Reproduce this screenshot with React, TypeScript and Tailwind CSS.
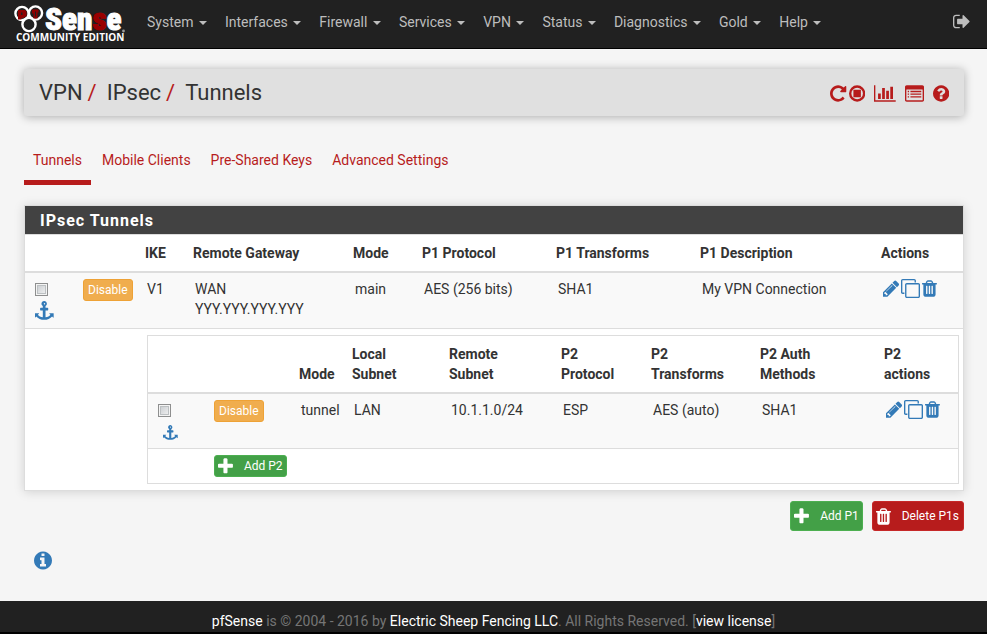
import type { ReactNode } from "react";

const PATHS = {
  repeat:
    "M1664 256v448q0 26-19 45t-45 19h-448q-42 0-59-40-17-39 14-69l138-138q-148-137-349-137-104 0-198.5 40.5t-163.5 109.5-109.5 163.5-40.5 198.5 40.5 198.5 109.5 163.5 163.5 109.5 198.5 40.5q119 0 225-52t179-147q7-10 23-12 15 0 25 9l137 138q9 8 9.5 20.5t-7.5 22.5q-109 132-264 204.5t-327 72.5q-156 0-298-61t-245-164-164-245-61-298 61-298 164-245 245-164 298-61q147 0 284.5 55.5t244.5 156.5l130-129q29-31 70-14 39 17 39 59z",
  stop: "M896 128a768 768 0 1 0 0 1536a768 768 0 1 0 0-1536zm0 224a544 544 0 1 1 0 1088a544 544 0 1 1 0-1088zM576 544h640q32 0 32 32v640q0 32-32 32h-640q-32 0-32-32v-640q0-32 32-32z",
  chart:
    "M640 896v512h-256v-512h256zm384-512v1024h-256v-1024h256zm1024 1152v128h-2048v-1536h128v1408h1920zm-640-896v768h-256v-768h256zm384-384v1152h-256v-1152h256z",
  list: "M160 128h1472q66 0 113 47t47 113v1216q0 66-47 113t-113 47h-1472q-66 0-113-47t-47-113v-1216q0-66 47-113t113-47zM128 544v960q0 32 32 32h1472q32 0 32-32v-960q0-32-32-32h-1472q-32 0-32 32zM256 640h128v128h-128zM512 640h1024v128h-1024zM256 896h128v128h-128zM512 896h1024v128h-1024zM256 1152h128v128h-128zM512 1152h1024v128h-1024z",
  question:
    "M1024 1376v-192q0-14-9-23t-23-9h-192q-14 0-23 9t-9 23v192q0 14 9 23t23 9h192q14 0 23-9t9-23zm256-672q0-88-55.5-163t-138.5-116-170-41q-243 0-371 213-15 24 8 42l132 100q7 6 19 6 16 0 25-12 53-68 86-92 34-24 86-24 48 0 85.5 26t37.5 59q0 38-20 61t-68 45q-63 28-115.5 86.5t-52.5 125.5v36q0 14 9 23t23 9h192q14 0 23-9t9-23q0-19 21.5-49.5t54.5-49.5q32-18 49-28.5t46-35 44.5-48 28-60.5 12.5-81zm384 192q0 209-103 385.5t-279.5 279.5-385.5 103-385.5-103-279.5-279.5-103-385.5 103-385.5 279.5-279.5 385.5-103 385.5 103 279.5 279.5 103 385.5z",
  info: "M1152 1376v-160q0-14-9-23t-23-9h-96v-512q0-14-9-23t-23-9h-320q-14 0-23 9t-9 23v160q0 14 9 23t23 9h96v320h-96q-14 0-23 9t-9 23v160q0 14 9 23t23 9h448q14 0 23-9t9-23zm-128-896v-160q0-14-9-23t-23-9h-192q-14 0-23 9t-9 23v160q0 14 9 23t23 9h192q14 0 23-9t9-23zm640 416q0 209-103 385.5t-279.5 279.5-385.5 103-385.5-103-279.5-279.5-103-385.5 103-385.5 279.5-279.5 385.5-103 385.5 103 279.5 279.5 103 385.5z",
  pencil:
    "M491 1536l91-91-235-235-91 91v107h128v128h107zm523-928q0-22-22-22-10 0-17 7l-542 542q-7 7-7 17 0 22 22 22 10 0 17-7l542-542q7-7 7-17zm-54-192l416 416-832 832h-416v-416zm683 96q0 53-37 90l-166 166-416-416 166-165q36-38 90-38 53 0 91 38l235 234q37 39 37 91z",
  clone:
    "M1664 1632v-1088q0-13-9.5-22.5t-22.5-9.5h-1088q-13 0-22.5 9.5t-9.5 22.5v1088q0 13 9.5 22.5t22.5 9.5h1088q13 0 22.5-9.5t9.5-22.5zm128-1088v1088q0 66-47 113t-113 47h-1088q-66 0-113-47t-47-113v-1088q0-66 47-113t113-47h1088q66 0 113 47t47 113zm-384-384v160h-128v-160q0-13-9.5-22.5t-22.5-9.5h-1088q-13 0-22.5 9.5t-9.5 22.5v1088q0 13 9.5 22.5t22.5 9.5h160v128h-160q-66 0-113-47t-47-113v-1088q0-66 47-113t113-47h1088q66 0 113 47t47 113z",
  trash:
    "M704 1376v-704q0-14-9-23t-23-9h-64q-14 0-23 9t-9 23v704q0 14 9 23t23 9h64q14 0 23-9t9-23zm256 0v-704q0-14-9-23t-23-9h-64q-14 0-23 9t-9 23v704q0 14 9 23t23 9h64q14 0 23-9t9-23zm256 0v-704q0-14-9-23t-23-9h-64q-14 0-23 9t-9 23v704q0 14 9 23t23 9h64q14 0 23-9t9-23zm-544-992h448l-48-117q-7-9-17-11h-317q-10 2-17 11zm928 32v64q0 14-9 23t-23 9h-96v948q0 83-47 143.5t-113 60.5h-832q-66 0-113-58.5t-47-141.5v-952h-96q-14 0-23-9t-9-23v-64q0-14 9-23t23-9h309l70-167q15-37 54-63t79-26h320q40 0 79 26t54 63l70 167h309q14 0 23 9t9 23z",
  plus: "M1600 736v192q0 40-28 68t-68 28h-416v416q0 40-28 68t-68 28h-192q-40 0-68-28t-28-68v-416h-416q-40 0-68-28t-28-68v-192q0-40 28-68t68-28h416v-416q0-40 28-68t68-28h192q40 0 68 28t28 68v416h416q40 0 68 28t28 68z",
  anchor:
    "M960 256q0-26-19-45t-45-19-45 19-19 45 19 45 45 19 45-19 19-45zm800 928v352q0 22-20 30-8 2-12 2-13 0-23-9l-93-93q-119 143-318.5 226.5t-429.5 83.5-429.5-83.5-318.5-226.5l-93 93q-9 9-23 9-4 0-12-2-20-8-20-30v-352q0-14 9-23t23-9h352q22 0 30 20 8 19-7 35l-100 100q67 91 189.5 153.5t271.5 82.5v-647h-192q-26 0-45-19t-19-45v-128q0-26 19-45t45-19h192v-163q-58-34-93-92.5t-35-128.5q0-106 75-181t181-75 181 75 75 181q0 70-35 128.5t-93 92.5v163h192q26 0 45 19t19 45v128q0 26-19 45t-45 19h-192v647q149-20 271.5-82.5t189.5-153.5l-100-100q-15-16-7-35 8-20 30-20h352q14 0 23 9t9 23z",
  signOut:
    "M704 1440q0 4 1 20t.5 26.5-3 23.5-10 19.5-20.5 6.5h-320q-119 0-203.5-84.5t-84.5-203.5v-704q0-119 84.5-203.5t203.5-84.5h320q13 0 22.5 9.5t9.5 22.5q0 4 1 20t.5 26.5-3 23.5-10 19.5-20.5 6.5h-320q-66 0-113 47t-47 113v704q0 66 47 113t113 47h312l11.5 1 11.5 3 8 5.5 7 9 2 13.5zm928-544q0 26-19 45l-544 544q-19 19-45 19t-45-19-19-45v-288h-448q-26 0-45-19t-19-45v-384q0-26 19-45t45-19h448v-288q0-26 19-45t45-19 45 19l544 544q19 19 19 45z",
};

const BOXES: Record<keyof typeof PATHS, string> = {
  repeat: "128 0 1536 1792",
  stop: "128 0 1536 1792",
  chart: "0 0 2048 1792",
  list: "0 0 1792 1792",
  question: "128 0 1536 1792",
  info: "128 0 1536 1792",
  pencil: "128 0 1536 1792",
  clone: "0 0 1792 1792",
  trash: "192 0 1408 1792",
  plus: "192 0 1408 1792",
  anchor: "0 0 1792 1792",
  signOut: "64 0 1600 1792",
};

function Icon({ name, className = "h-[19px]" }: { name: keyof typeof PATHS; className?: string }) {
  return (
    <svg viewBox={BOXES[name]} className={`block w-auto shrink-0 ${className}`} fill="currentColor" aria-hidden="true">
      <path fillRule="evenodd" d={PATHS[name]} />
    </svg>
  );
}

function Logo() {
  return (
    <svg viewBox="0 0 112 40" className="h-10 w-28 overflow-visible" role="img" aria-label="pfSense Community Edition">
      <g fill="none" stroke="#fff" strokeWidth="2.4">
        <circle cx="8" cy="9.5" r="6.6" fill="#212121" />
        <circle cx="21.5" cy="9" r="6.6" fill="#212121" />
        <circle cx="15" cy="20.5" r="6.6" fill="#212121" />
      </g>
      <path d="M4 6h7l1.500 1.500v4.500l-3 2h-2v1.500h-3.500zM18 5.500h6.500v3h-1v6h-4v-5h-1.500z" fill="#900000" />
      <path d="M7 8.500h1.500v2.500h-1.500zM21 7.500h1v5h-1z" fill="#212121" />
      <text
        x="31"
        y="26"
        fontSize="31"
        fontWeight="900"
        fontFamily="'Roboto Condensed', 'Open Sans Condensed', Roboto, sans-serif"
        fill="#fff"
        stroke="#fff"
        strokeWidth="1"
      >
        Sen<tspan fill="#990000" stroke="#990000">s</tspan>e
      </text>
      <circle cx="109.500" cy="27" r="1.400" fill="#999" />
      <text x="2" y="37" fontSize="10" fontWeight="700" fontFamily="'Open Sans', sans-serif" fill="#fff">
        COMMUNITY EDITION
      </text>
    </svg>
  );
}

function Tick({ label }: { label: string }) {
  return (
    <input
      type="checkbox"
      aria-label={label}
      className="block size-[13px] appearance-none border border-[#8e8f8f] bg-linear-to-br from-[#c4c8cc] to-[#f6f6f6] shadow-[inset_0_0_0_1px_#f4f4f4,inset_0_0_0_2px_#bcc0c2]"
    />
  );
}

function DisableButton() {
  return (
    <button className="block h-[22px] rounded-[3px] border border-[#eea236] bg-[#f0ad4e] px-1 text-xs text-white">
      Disable
    </button>
  );
}

function Actions() {
  return (
    <div className="flex h-5 items-start gap-0.5 text-[#337ab7]">
      <a href="#edit" aria-label="Edit"><Icon name="pencil" /></a>
      <a href="#copy" aria-label="Copy"><Icon name="clone" /></a>
      <a href="#delete" aria-label="Delete"><Icon name="trash" /></a>
    </div>
  );
}

function Th({ children }: { children?: ReactNode }) {
  return <th className="border-b-2 border-[#ddd] px-[5px] py-2 text-left align-bottom font-bold">{children}</th>;
}

function Td({ children }: { children?: ReactNode }) {
  return <td className="bg-[#f9f9f9] px-[7px] py-1.5 align-top">{children}</td>;
}

function NestedTable() {
  return (
    <table className="w-full table-fixed border-separate border-spacing-0 border border-[#ddd]">
      <colgroup>
        <col className="w-[59px]" />
        <col className="w-[87px]" />
        <col className="w-[53px]" />
        <col className="w-[97px]" />
        <col className="w-[112px]" />
        <col className="w-[90px]" />
        <col className="w-[109px]" />
        <col className="w-[124px]" />
        <col className="w-[79px]" />
      </colgroup>
      <thead>
        <tr>
          <Th />
          <Th />
          <Th>Mode</Th>
          <Th>Local<br />Subnet</Th>
          <Th>Remote<br />Subnet</Th>
          <Th>P2<br />Protocol</Th>
          <Th>P2<br />Transforms</Th>
          <Th>P2 Auth<br />Methods</Th>
          <Th>P2<br />actions</Th>
        </tr>
      </thead>
      <tbody>
        <tr>
          <td className="bg-[#f9f9f9] px-2.5 pt-2.5 pb-2 align-top">
            <Tick label="Select phase 2 entry" />
            <a href="#move" aria-label="Move" className="mt-2 ml-[5px] block text-[#337ab7]">
              <Icon name="anchor" className="h-[15px]" />
            </a>
          </td>
          <Td><DisableButton /></Td>
          <Td>tunnel</Td>
          <Td>LAN</Td>
          <Td>10.1.1.0/24</Td>
          <Td>ESP</Td>
          <Td>AES (auto)</Td>
          <Td>SHA1</Td>
          <Td><Actions /></Td>
        </tr>
        <tr>
          <td className="border-t border-[#ddd]" />
          <td colSpan={8} className="border-t border-[#ddd] px-[7px] py-1.5">
            <button className="flex h-[22px] items-center gap-[11px] rounded-[3px] border border-[#4caf50] bg-[#43a047] px-[3px] text-xs text-white">
              <Icon name="plus" />
              Add P2
            </button>
          </td>
        </tr>
      </tbody>
    </table>
  );
}

function TunnelTable() {
  return (
    <table className="w-full table-fixed border-separate border-spacing-0">
      <colgroup>
        <col className="w-[51px]" />
        <col className="w-[64px]" />
        <col className="w-[48px]" />
        <col className="w-[160px]" />
        <col className="w-[69px]" />
        <col className="w-[134px]" />
        <col className="w-[144px]" />
        <col className="w-[181px]" />
        <col className="w-[87px]" />
      </colgroup>
      <thead>
        <tr>
          <Th />
          <Th />
          <Th>IKE</Th>
          <Th>Remote Gateway</Th>
          <Th>Mode</Th>
          <Th>P1 Protocol</Th>
          <Th>P1 Transforms</Th>
          <Th>P1 Description</Th>
          <Th>Actions</Th>
        </tr>
      </thead>
      <tbody>
        <tr>
          <td className="bg-[#f9f9f9] px-2.5 pt-2.5 pb-2 align-top">
            <Tick label="Select tunnel" />
            <a href="#move" aria-label="Move" className="mt-[5px] block text-[#337ab7]">
              <Icon name="anchor" />
            </a>
          </td>
          <Td><DisableButton /></Td>
          <Td>V1</Td>
          <Td>WAN<br />YYY.YYY.YYY.YYY</Td>
          <Td>main</Td>
          <Td>AES (256 bits)</Td>
          <Td>SHA1</Td>
          <Td>My VPN Connection</Td>
          <Td><Actions /></Td>
        </tr>
        <tr>
          <td colSpan={2} className="border-t border-[#ddd]" />
          <td colSpan={7} className="border-t border-[#ddd] py-1.5 pr-1 pl-[7px]">
            <NestedTable />
          </td>
        </tr>
      </tbody>
    </table>
  );
}

const MENU = ["System", "Interfaces", "Firewall", "Services", "VPN", "Status", "Diagnostics", "Gold", "Help"];
const TABS = ["Tunnels", "Mobile Clients", "Pre-Shared Keys", "Advanced Settings"];

export default function App() {
  return (
    <div className="flex min-h-screen flex-col bg-[#f5f5f5] font-[Roboto,sans-serif] text-sm leading-5 text-[#333]">
      <header className="flex h-[49px] items-start border-b border-black bg-[#212121] pr-[17px] pl-3.5 text-[#bdbdbd]">
        <a href="#home" className="mt-1"><Logo /></a>
        <nav className="ml-3 flex pt-3">
          {MENU.map((item) => (
            <button key={item} className="px-[9px] leading-5">
              {item}{" "}
              <span className="ml-0.5 inline-block border-x-4 border-t-4 border-x-transparent border-t-current align-middle" />
            </button>
          ))}
        </nav>
        <a href="#logout" aria-label="Log out" className="mt-3 ml-auto"><Icon name="signOut" /></a>
      </header>

      <main className="flex-1 pt-5 pr-[23px] pb-6 pl-6">
        <div className="flex h-[47px] items-center justify-between rounded-[3px] bg-[#e0e0e0] px-[15px] shadow-[0_1px_10px_rgba(0,0,0,0.3)]">
          <ol className="flex text-[22px] leading-8">
            <li>VPN<span className="mr-2.5 ml-[5px] text-[#b71c1c]">/</span></li>
            <li>IPsec<span className="mr-2.5 ml-[5px] text-[#b71c1c]">/</span></li>
            <li>Tunnels</li>
          </ol>
          <div className="flex items-center gap-[9px] pt-0.5 text-[#b71c1c]">
            <div className="flex gap-0.5">
              <a href="#restart" aria-label="Restart service"><Icon name="repeat" /></a>
              <a href="#stop" aria-label="Stop service"><Icon name="stop" /></a>
            </div>
            <a href="#status" aria-label="Status"><Icon name="chart" /></a>
            <a href="#logs" aria-label="Logs"><Icon name="list" /></a>
            <a href="#help" aria-label="Help"><Icon name="question" /></a>
          </div>
        </div>

        <nav className="mt-[34px] flex gap-0.5 text-[#b71c1c]">
          {TABS.map((tab, i) => (
            <a
              key={tab}
              href="#tab"
              className={
                i === 0
                  ? "border-b-[5px] border-[#b71c1c] px-[9px] pb-2.5"
                  : "border-b-[5px] border-transparent px-[9px] pb-2.5"
              }
            >
              {tab}
            </a>
          ))}
        </nav>

        <section className="mt-5 border border-[#ddd] bg-white shadow-[0_1px_10px_rgba(0,0,0,0.15)]">
          <h2 className="border-b border-[#ddd] bg-[#424242] px-[15px] pt-[5px] pb-[3px] text-base leading-5 font-bold tracking-[1px] text-white">
            IPsec Tunnels
          </h2>
          <TunnelTable />
        </section>

        <div className="mt-2.5 flex justify-end gap-[9px]">
          <button className="flex h-[30px] items-center gap-[11px] rounded-[3px] border border-[#4caf50] bg-[#43a047] px-[3px] text-xs text-white">
            <Icon name="plus" />
            Add P1
          </button>
          <button className="flex h-[30px] items-center gap-[11px] rounded-[3px] border border-[#c62828] bg-[#b71c1c] pr-1 pl-[3px] text-xs text-white">
            <Icon name="trash" />
            Delete P1s
          </button>
        </div>

        <button aria-label="Information" className="mt-[19px] ml-2.5 block text-[#337ab7]">
          <Icon name="info" className="h-[21px]" />
        </button>
      </main>

      <footer className="border-b-2 border-black bg-[#212121] pt-2.5 pb-px text-center text-[#757575]">
        <a href="#pfsense" className="text-white">pfSense</a> is © 2004 - 2016 by{" "}
        <a href="#esf" className="text-white">Electric Sheep Fencing LLC</a>. All Rights Reserved. [
        <a href="#license" className="text-white">view license</a>]
      </footer>
    </div>
  );
}
